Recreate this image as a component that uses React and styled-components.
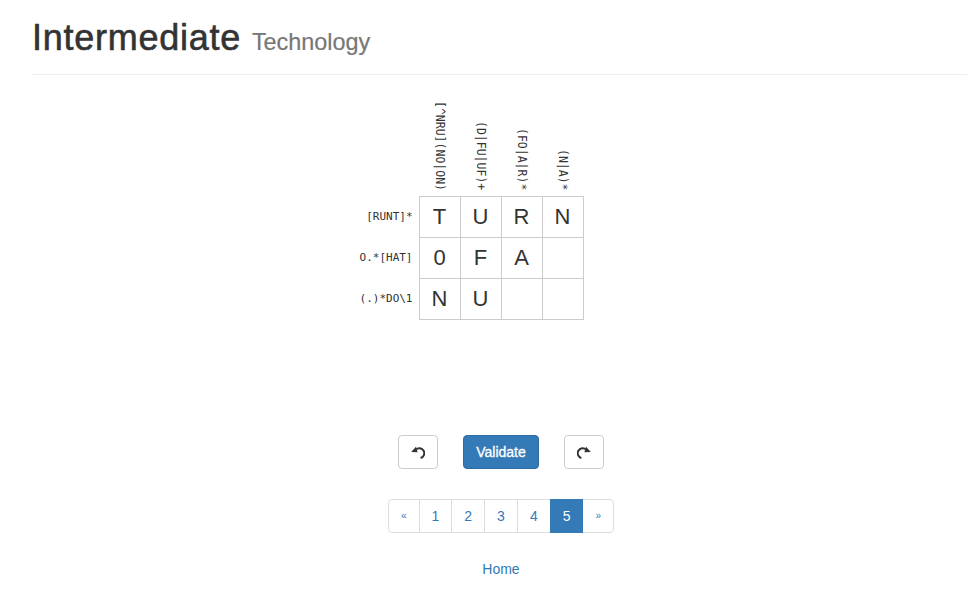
import React from 'react';
import styled, { createGlobalStyle } from 'styled-components';

const GlobalStyle = createGlobalStyle`
  body {
    margin: 0;
    background: #fff;
    color: #333;
    font-family: "Liberation Sans", Helvetica, Arial, sans-serif;
    font-size: 14px;
    line-height: 20px;
  }
`;

const Page = styled.div`
  padding-left: 32px;
`;

const Header = styled.div`
  padding: 18px 0 11px;
  margin-right: 1px;
  border-bottom: 1px solid #eee;
`;

const Title = styled.h1`
  margin: 0;
  font-size: 36px;
  line-height: 39.6px;
  font-weight: 400;
  letter-spacing: 0.75px;
  color: #333;
  -webkit-text-stroke: 0.6px #333;

  small {
    font-size: 65%;
    letter-spacing: 0;
    color: #777;
    -webkit-text-stroke: 0.2px #777;
  }
`;

const Main = styled.div`
  padding-left: 2px;
`;

const Board = styled.div`
  margin-top: 21px;
  display: grid;
  grid-template-columns: 1fr 165px 1fr;
  font-family: "DejaVu Sans Mono", "Liberation Mono", monospace;
  font-size: 11px;
  color: #333;
`;

const ColHeads = styled.div`
  grid-column: 2;
  display: grid;
  grid-template-columns: repeat(4, 41px);
  height: 100px;
`;

const ColHead = styled.div`
  display: flex;
  align-items: flex-end;
  justify-content: center;
  padding-bottom: 5px;
  padding-left: 1px;

  span {
    writing-mode: vertical-rl;
    font-size: 11.5px;
    line-height: 14px;
    white-space: nowrap;
  }
`;

const RowHeads = styled.div`
  grid-column: 1;
  display: grid;
  grid-auto-rows: 41px;
  padding-top: 1px;
`;

const RowHead = styled.div`
  display: flex;
  align-items: center;
  justify-content: flex-end;
  padding-right: 6px;
  white-space: nowrap;
`;

const Cells = styled.div`
  grid-column: 2;
  display: grid;
  grid-template-columns: repeat(4, 40px);
  grid-auto-rows: 40px;
  gap: 1px;
  background: #ccc;
  border: 1px solid #ccc;
`;

const Cell = styled.div`
  background: #fff;
  display: flex;
  align-items: center;
  justify-content: center;
  font-family: "Liberation Sans", Helvetica, Arial, sans-serif;
  font-size: 22px;
  color: #333;
`;

const Controls = styled.div`
  margin-top: 115px;
  display: flex;
  justify-content: center;
  gap: 25px;
`;

const Button = styled.button`
  box-sizing: border-box;
  height: 34px;
  padding: 6px 12px;
  border-radius: 4px;
  border: 1px solid ${p => (p.$primary ? '#2e6da4' : '#ccc')};
  background: ${p => (p.$primary ? '#337ab7' : '#fff')};
  color: ${p => (p.$primary ? '#fff' : '#333')};
  font-family: "Liberation Sans", Helvetica, Arial, sans-serif;
  font-size: 14px;
  line-height: 20px;
  -webkit-text-stroke: ${p => (p.$primary ? '0.3px #fff' : '0')};
  display: flex;
  align-items: center;
  justify-content: center;
  cursor: pointer;

  svg {
    display: block;
  }
`;

const Pager = styled.ul`
  margin: 30px 0 0;
  padding: 0;
  list-style: none;
  display: flex;
  justify-content: center;
`;

const PageItem = styled.li`
  box-sizing: border-box;
  height: 34px;
  padding: 6px 12px;
  margin-left: -1px;
  border: 1px solid ${p => (p.$active ? '#337ab7' : '#ddd')};
  background: ${p => (p.$active ? '#337ab7' : '#fff')};
  color: ${p => (p.$active ? '#fff' : '#337ab7')};
  font-size: ${p => (p.$arrow ? '10px' : '14px')};
  line-height: 20px;
  position: relative;
  z-index: ${p => (p.$active ? 2 : 1)};
  display: flex;
  align-items: center;

  &:first-child {
    margin-left: 0;
    border-radius: 4px 0 0 4px;
  }
  &:last-child {
    border-radius: 0 4px 4px 0;
  }
`;

const HomeLink = styled.a`
  display: block;
  margin-top: 26px;
  text-align: center;
  color: #337ab7;
  text-decoration: none;
`;

const UndoIcon = ({ flip }) => (
  <svg width="14" height="14" viewBox="0 0 14 14" style={flip ? { transform: 'scaleX(-1)' } : undefined}>
    <path d="M4.8 4.6 A5 5 0 1 1 9.6 13" fill="none" stroke="#333" strokeWidth="2" />
    <polygon points="0.2,7 5,1.8 6.6,7.2" fill="#333" />
  </svg>
);

const cols = ['[^NRU](NO|ON)', '(D|FU|UF)+', '(FO|A|R)*', '(N|A)*'];
const rows = ['[RUNT]*', 'O.*[HAT]', '(.)*DO\\1'];
const grid = [
  ['T', 'U', 'R', 'N'],
  ['0', 'F', 'A', ''],
  ['N', 'U', '', ''],
];

export default function App() {
  return (
    <Page>
      <GlobalStyle />
      <Header>
        <Title>
          Intermediate <small>Technology</small>
        </Title>
      </Header>
      <Main>
        <Board>
          <ColHeads>
            {cols.map(c => (
              <ColHead key={c}>
                <span>{c}</span>
              </ColHead>
            ))}
          </ColHeads>
          <RowHeads>
            {rows.map(r => (
              <RowHead key={r}>{r}</RowHead>
            ))}
          </RowHeads>
          <Cells>
            {grid.flat().map((v, i) => (
              <Cell key={i}>{v}</Cell>
            ))}
          </Cells>
        </Board>
        <Controls>
          <Button aria-label="Undo">
            <UndoIcon />
          </Button>
          <Button $primary>Validate</Button>
          <Button aria-label="Redo">
            <UndoIcon flip />
          </Button>
        </Controls>
        <Pager>
          <PageItem $arrow>«</PageItem>
          <PageItem>1</PageItem>
          <PageItem>2</PageItem>
          <PageItem>3</PageItem>
          <PageItem>4</PageItem>
          <PageItem $active>5</PageItem>
          <PageItem $arrow>»</PageItem>
        </Pager>
        <HomeLink href="#">Home</HomeLink>
      </Main>
    </Page>
  );
}
